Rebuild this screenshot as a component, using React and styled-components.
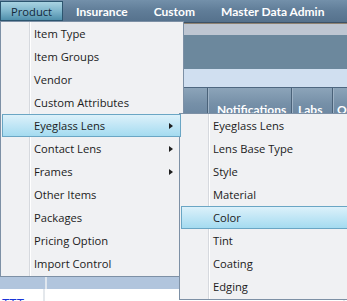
import React from "react";
import styled, {createGlobalStyle} from "styled-components";

const GlobalStyle = createGlobalStyle`
  html, body {
    margin: 0;
    padding: 0;
    width: 347px;
    height: 301px;
    overflow: hidden;
    background: #ffffff;
  }
  #root {
    position: relative;
    width: 347px;
    height: 301px;
    overflow: hidden;
  }
`;

const Page = styled.div`
  display: flex;
  flex-direction: column;
  width: 347px;
  height: 301px;
  font-family: "Open Sans", "Liberation Sans", sans-serif;
`;

const NavBar = styled.nav`
  display: flex;
  align-items: flex-start;
  height: 23px;
  flex-shrink: 0;
  padding-top: 1px;
  box-sizing: border-box;
  background: linear-gradient(#7390aa 0%, #617e99 45%, #55718c 100%);
  border-bottom: 1px solid #3d5268;
  white-space: nowrap;
`;

const NavItem = styled.div`
  display: flex;
  align-items: center;
  height: 20px;
  box-sizing: border-box;
  padding: 0 ${(p) => (p.$active ? 10 : 12)}px 0 ${(p) => (p.$active ? 10 : 12)}px;
  font-family: ${(p) => (p.$active ? '"Open Sans"' : "Lato")}, "Liberation Sans", sans-serif;
  font-size: ${(p) => (p.$active ? "11.2px" : "12px")};
  font-weight: ${(p) => (p.$active ? 400 : 700)};
  color: ${(p) => (p.$active ? "#13283a" : "#ffffff")};
  border: 1px solid ${(p) => (p.$active ? "#2c556f" : "transparent")};
  background: ${(p) =>
    p.$active ? "linear-gradient(#a9d3e2 0%, #7fb6cc 50%, #4f8fab 100%)" : "none"};
`;

const GreyBand = styled.div`
  height: 12px;
  flex-shrink: 0;
  background: #bec6d2;
  border-top: 1px solid #8e8272;
  box-sizing: border-box;
`;

const SlateBand = styled.div`
  height: 34px;
  flex-shrink: 0;
  background: #6c889d;
`;

const InfoBand = styled.div`
  height: 18px;
  flex-shrink: 0;
  background: #d0dff0;
`;

const HeaderRow = styled.div`
  display: flex;
  height: 32px;
  flex-shrink: 0;
  background: linear-gradient(#8ca4b9 0%, #7690a8 50%, #6a859f 100%);
  border-top: 1px solid #4e6780;
  box-sizing: border-box;
`;

const HeaderCell = styled.div`
  width: ${(p) => p.$w}px;
  flex-shrink: 0;
  box-sizing: border-box;
  padding: 14px 0 0 ${(p) => p.$pad || 9}px;
  border-right: 1px solid #4a6279;
  box-shadow: inset 1px 0 0 #9fb3c6;
  font-family: Lato, "Liberation Sans", sans-serif;
  font-size: 12px;
  font-weight: 700;
  color: #ffffff;
  white-space: nowrap;
  overflow: hidden;
`;

const Filler = styled.div`
  height: 157px;
  flex-shrink: 0;
  background: #ffffff;
`;

const GridHead = styled.div`
  display: flex;
  height: 13px;
  flex-shrink: 0;
  background: #b1c5dd;
`;

const GridCell = styled.div`
  width: ${(p) => p.$w}px;
  flex-shrink: 0;
  border-right: 2px solid #dfe6ee;
`;

const LinkLine = styled.div`
  width: 22px;
  height: 1px;
  background: #2342d6;
`;

const GridRow = styled.div`
  display: flex;
  flex: 1;
  background: #ffffff;
`;

const RowCell = styled.div`
  width: ${(p) => p.$w}px;
  flex-shrink: 0;
  border-right: 2px solid #e4e8ec;
  padding: 8px 0 0 2px;
  box-sizing: border-box;
  font-family: "Liberation Sans", sans-serif;
  font-size: 12px;
  line-height: 14px;
  color: #1a35d8;
  white-space: nowrap;
  overflow: hidden;
`;

const Menu = styled.div`
  position: absolute;
  left: ${(p) => p.$x}px;
  top: ${(p) => p.$y}px;
  width: ${(p) => p.$w}px;
  box-sizing: border-box;
  display: flex;
  flex-direction: column;
  padding: 0 0 1px;
  background: #f0f1f3;
  border: 1px solid #7d90a5;
  font-family: "Open Sans", "Liberation Sans", sans-serif;
  font-size: 11.2px;
  color: #1b1b1b;
  &::before {
    content: "";
    position: absolute;
    top: 0;
    bottom: 0;
    left: 28px;
    width: 1px;
    background: #d6d9de;
    box-shadow: 1px 0 0 #ffffff;
  }
`;

const MenuItem = styled.div`
  position: relative;
  z-index: 1;
  display: flex;
  align-items: center;
  justify-content: space-between;
  height: 23px;
  box-sizing: border-box;
  margin: 0 ${(p) => p.$mr || 0}px 0 1px;
  padding: 0 7px 0 31px;
  border: 1px solid ${(p) => (p.$active ? "#6aa6c4" : "transparent")};
  background: ${(p) =>
    p.$active ? "linear-gradient(#dcf1fa 0%, #c3e7f6 45%, #a4dbf0 100%)" : "transparent"};
  white-space: nowrap;
`;

const Arrow = styled.span`
  width: 0;
  height: 0;
  border-top: 3px solid transparent;
  border-bottom: 3px solid transparent;
  border-left: 4px solid #1e1e1e;
`;

const productItems = [
  {label: "Item Type"},
  {label: "Item Groups"},
  {label: "Vendor"},
  {label: "Custom Attributes"},
  {label: "Eyeglass Lens", sub: true, active: true},
  {label: "Contact Lens", sub: true},
  {label: "Frames", sub: true},
  {label: "Other Items"},
  {label: "Packages"},
  {label: "Pricing Option"},
  {label: "Import Control"},
];

const lensItems = [
  "Eyeglass Lens",
  "Lens Base Type",
  "Style",
  "Material",
  "Color",
  "Tint",
  "Coating",
  "Edging",
];

const App = () => {
  return (
    <>
      <GlobalStyle />
      <Page>
        <NavBar>
          <NavItem $active>Product</NavItem>
          <NavItem>Insurance</NavItem>
          <NavItem>Custom</NavItem>
          <NavItem>Master Data Admin</NavItem>
          <NavItem>Tools</NavItem>
        </NavBar>
        <GreyBand />
        <SlateBand />
        <InfoBand />
        <HeaderRow>
          <HeaderCell $w={208} />
          <HeaderCell $w={84}>Notifications</HeaderCell>
          <HeaderCell $w={41} $pad={6}>Labs</HeaderCell>
          <HeaderCell $w={60} $pad={4}>Orders</HeaderCell>
        </HeaderRow>
        <Filler />
        <GridHead>
          <GridCell $w={45}>
            <LinkLine />
          </GridCell>
          <GridCell $w={300} />
        </GridHead>
        <GridRow>
          <RowCell $w={45}>TTT</RowCell>
          <RowCell $w={300} />
        </GridRow>
      </Page>

      <Menu $x={0} $y={21} $w={184}>
        {productItems.map((it) => (
          <MenuItem key={it.label} $active={it.active} $mr={2}>
            <span>{it.label}</span>
            {it.sub && <Arrow />}
          </MenuItem>
        ))}
      </Menu>

      <Menu $x={179} $y={113} $w={190}>
        {lensItems.map((label) => (
          <MenuItem key={label} $active={label === "Color"}>
            <span>{label}</span>
          </MenuItem>
        ))}
      </Menu>
    </>
  );
};

export default App;
